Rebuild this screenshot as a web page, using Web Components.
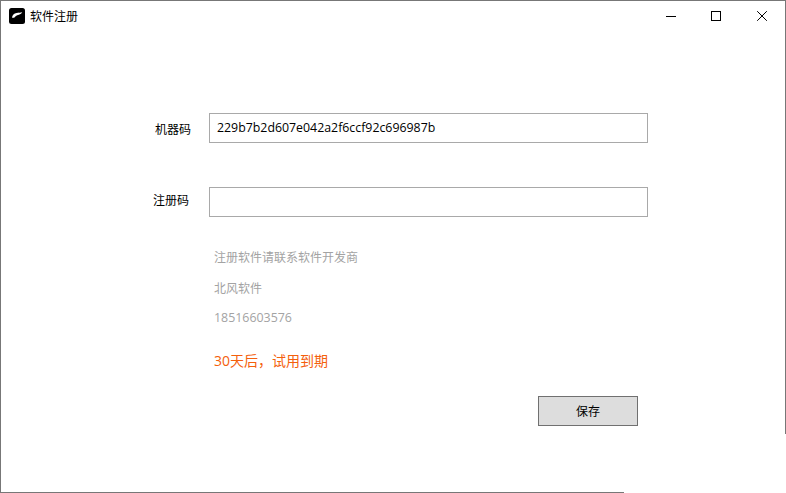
<!DOCTYPE html>
<html lang="zh-CN">
<head>
<meta charset="utf-8">
<title>软件注册</title>
<style>
html,body{margin:0;padding:0;background:#fff}
body{width:786px;height:493px;overflow:hidden;font-family:"Noto Sans CJK SC","Open Sans",sans-serif;font-size:12px;color:#000}
</style>
</head>
<body>
<reg-window>
  <title-bar slot="bar" caption="软件注册"></title-bar>
  <field-row label="机器码" value="229b7b2d607e042a2f6ccf92c696987b" left="155" top="83" shift="2"></field-row>
  <field-row label="注册码" value="" left="153" top="44" shift="-4"></field-row>
  <info-block></info-block>
  <save-button>保存</save-button>
</reg-window>
<script>
const FONT = '"Noto Sans CJK SC","Open Sans",sans-serif';
const LATIN = '"Open Sans","Noto Sans CJK SC",sans-serif';

customElements.define('reg-window', class extends HTMLElement {
  constructor(){
    super();
    this.attachShadow({mode:'open'}).innerHTML = `
      <style>
        :host{display:flex;flex-direction:column;position:relative;box-sizing:border-box;width:786px;height:493px;
          border-top:1px solid #777;border-left:1px solid #777;background:#fff}
        .right{position:absolute;right:0;top:-1px;width:1px;height:434px;background:#777}
        .bottom{position:absolute;left:-1px;bottom:0;width:624px;height:1px;background:#777}
      </style>
      <slot name="bar"></slot>
      <slot></slot>
      <div class="right"></div>
      <div class="bottom"></div>`;
  }
});

customElements.define('title-bar', class extends HTMLElement {
  constructor(){
    super();
    this.attachShadow({mode:'open'}).innerHTML = `
      <style>
        :host{display:flex;align-items:center;height:29px;padding-left:8px;font:12px/16px ${FONT};color:#000}
        .logo{width:16px;height:16px;margin:0 5px 0 0;flex:none;display:block}
        .cap{flex:1;white-space:nowrap}
        .btns{display:flex;align-items:center;height:29px;padding-right:19px}
        .btns svg{display:block;flex:none}
        .btns svg + svg{margin-left:35px}
        .btns svg + svg + svg{margin-left:36px}
      </style>
      <svg class="logo" viewBox="0 0 16 16" aria-hidden="true">
        <rect width="16" height="16" rx="2.5" fill="#000"/>
        <path d="M3 9.8C3.2 7.2 5 5.2 7.6 4.9c2-.2 3.6-.1 5.6-.6-.7 1.5-2.3 2.4-4 2.7-1.5.3-2.4.9-3.2 2-.6.8-1.9 1-3 .8z" fill="#fff"/>
      </svg>
      <span class="cap"></span>
      <div class="btns">
        <svg width="10" height="10" viewBox="0 0 10 10"><path d="M0 5.5H10" stroke="#000" fill="none"/></svg>
        <svg width="10" height="10" viewBox="0 0 10 10"><rect x=".5" y=".5" width="9" height="9" stroke="#000" fill="none"/></svg>
        <svg width="10" height="10" viewBox="0 0 10 10"><path d="M.2 .2L9.8 9.8M9.8 .2L.2 9.8" stroke="#000" stroke-width="1" fill="none"/></svg>
      </div>`;
    this.shadowRoot.querySelector('.cap').textContent = this.getAttribute('caption') || '';
  }
});

customElements.define('field-row', class extends HTMLElement {
  constructor(){
    super();
    const left = +this.getAttribute('left'), top = +this.getAttribute('top'), shift = +this.getAttribute('shift');
    this.attachShadow({mode:'open'}).innerHTML = `
      <style>
        :host{display:flex;align-items:center;height:30px;margin-top:${top}px;padding-left:${left-1}px;font:12px/16px ${FONT};color:#000}
        .lab{width:${209-left}px;flex:none;white-space:nowrap;padding-top:${Math.max(shift,0)}px;padding-bottom:${Math.max(-shift,0)}px}
        .box{box-sizing:border-box;width:439px;height:30px;border:1px solid #a9a9a9;background:#fff;
          padding:0 7px;display:flex;align-items:center;font:12.35px/16px ${LATIN};color:#000;white-space:nowrap}
      </style>
      <span class="lab"></span>
      <div class="box"></div>`;
    this.shadowRoot.querySelector('.lab').textContent = this.getAttribute('label');
    this.shadowRoot.querySelector('.box').textContent = this.getAttribute('value');
  }
});

customElements.define('info-block', class extends HTMLElement {
  constructor(){
    super();
    this.attachShadow({mode:'open'}).innerHTML = `
      <style>
        :host{display:flex;flex-direction:column;margin-top:32px;padding-left:213px;font:12px/16px ${FONT};color:#a3a3a3}
        div{height:16px;white-space:nowrap}
        .b{margin-top:15px}
        .c{margin-top:14px;font-family:${LATIN};font-size:12.4px}
        .d{margin-top:26px;font-family:${LATIN};font-size:14px;line-height:18px;height:18px;color:#f4600c}
      </style>
      <div>注册软件请联系软件开发商</div>
      <div class="b">北风软件</div>
      <div class="c">18516603576</div>
      <div class="d">30天后，试用到期</div>`;
  }
});

customElements.define('save-button', class extends HTMLElement {
  constructor(){
    super();
    this.attachShadow({mode:'open'}).innerHTML = `
      <style>
        :host{display:flex;align-self:flex-start;align-items:center;justify-content:center;box-sizing:border-box;
          width:100px;height:30px;margin:26px 0 0 537px;background:#ddd;border:1px solid #707070;font:12px/16px ${FONT};color:#000}
      </style>
      <slot></slot>`;
  }
});
</script>
</body>
</html>
